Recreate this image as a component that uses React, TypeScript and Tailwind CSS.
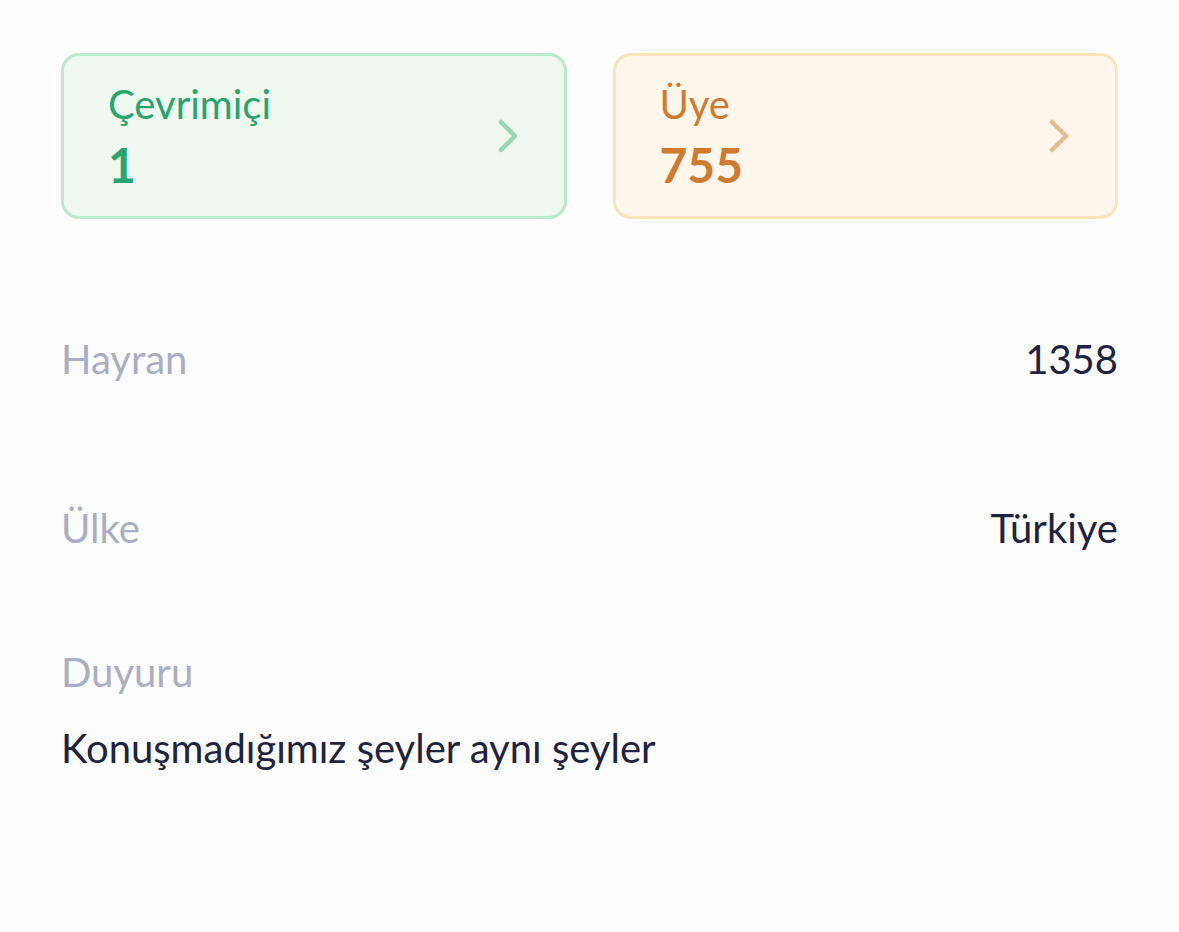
const ChevronRight = ({ className }: { className?: string }) => (
  <svg viewBox="0 0 20 34" className={className} fill="none" stroke="currentColor" strokeWidth={4.5} strokeLinecap="round" strokeLinejoin="round">
    <path d="M3 3 L17 17 L3 31" />
  </svg>
);

type StatCardProps = {
  label: string;
  value: string;
  tone: "green" | "orange";
};

function StatCard({ label, value, tone }: StatCardProps) {
  const green = tone === "green";
  return (
    <div
      className={
        green
          ? "h-[166px] rounded-[18px] border-[3px] border-[#b9ead0] bg-[#eff9ef] flex items-center justify-between pl-[44px] pr-[46px]"
          : "h-[166px] rounded-[18px] border-[3px] border-[#fbe3ba] bg-[#fff6ec] flex items-center justify-between pl-[44px] pr-[46px]"
      }
    >
      <div className="flex flex-col gap-[10px]">
        <span className={green ? "text-[40px] leading-[48px] text-[#27a56f]" : "text-[40px] leading-[48px] text-[#cf7a2f]"}>
          {label}
        </span>
        <span className={green ? "text-[48px] leading-[54px] font-bold text-[#27a56f]" : "text-[48px] leading-[54px] font-bold text-[#cf7a2f]"}>
          {value}
        </span>
      </div>
      <ChevronRight className={green ? "w-[20px] h-[34px] text-[#94d8b5]" : "w-[20px] h-[34px] text-[#e6bc8f]"} />
    </div>
  );
}

function InfoRow({ label, value }: { label: string; value: string }) {
  return (
    <div className="h-[169px] flex items-center justify-between">
      <span className="text-[40px] leading-[48px] text-[#abadc3]">{label}</span>
      <span className="text-[40px] leading-[48px] text-[#1f2240]">{value}</span>
    </div>
  );
}

export default function App() {
  return (
    <div className="min-h-[932px] bg-[#fdfdfd] px-[61px] pt-[53px]" style={{ fontFamily: "Lato, 'Noto Sans', sans-serif" }}>
      <div className="grid grid-cols-2 gap-[46px]">
        <StatCard label="Çevrimiçi" value="1" tone="green" />
        <StatCard label="Üye" value="755" tone="orange" />
      </div>

      <div className="mt-[55px]">
        <InfoRow label="Hayran" value="1358" />
        <InfoRow label="Ülke" value="Türkiye" />
      </div>

      <div className="mt-[36px] flex flex-col gap-[28px]">
        <span className="text-[40px] leading-[48px] text-[#abadc3]">Duyuru</span>
        <p className="text-[40px] leading-[48px] text-[#1f2240]">Konuşmadığımız şeyler aynı şeyler</p>
      </div>
    </div>
  );
}
